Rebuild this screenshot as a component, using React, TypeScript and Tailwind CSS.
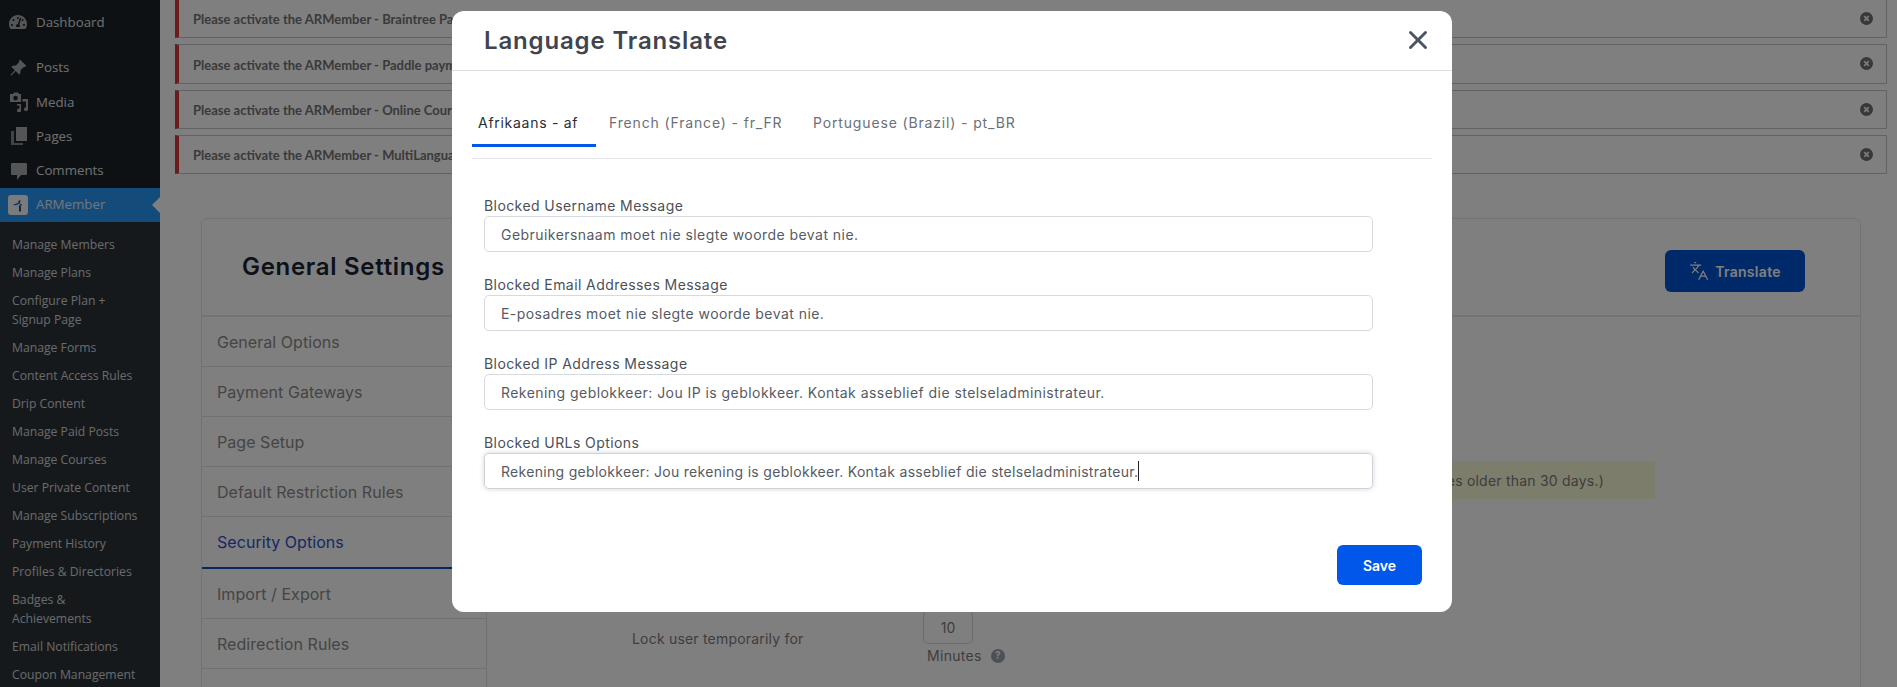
import React from 'react';
import { X, Languages } from 'lucide-react';
import { FaTachometerAlt } from 'react-icons/fa';
import { BsPinAngleFill } from 'react-icons/bs';

const MediaIcon = () => (
    <svg width="20" height="20" viewBox="0 0 20 20" fill="currentColor">
        <path d="M1 2h3l1-1.500h4L10 2h2v8H1V2zm5.500 1.800a2.300 2.300 0 1 0 0 4.600 2.300 2.300 0 0 0 0-4.600z" />
        <path d="M13.500 6.500H19v10.200a2 2 0 1 1-2-2V9h-3.500V6.500zM12 18a2 2 0 1 1-2-2h.5v-3H8v-1.500h4V18z" transform="translate(0 .5)" />
    </svg>
);

const PagesIcon = () => (
    <svg width="20" height="20" viewBox="0 0 20 20" fill="currentColor">
        <path d="M7 1h11v14H7V1z" />
        <path d="M2 5h3v12h9v2H2V5z" opacity=".75" />
    </svg>
);

const CommentIcon = () => (
    <svg width="20" height="20" viewBox="0 0 20 20" fill="currentColor">
        <path d="M3 2h14a1 1 0 0 1 1 1v10a1 1 0 0 1-1 1h-5l-4 5v-5H3a1 1 0 0 1-1-1V3a1 1 0 0 1 1-1z" />
    </svg>
);

const ArLogo = () => (
    <div className="w-5 h-5 rounded-[3px] bg-[#f4f6f8] flex items-center justify-center">
        <svg width="14" height="14" viewBox="0 0 14 14" fill="none">
            <path d="M1.500 7 7.500 4.800 7 3.500 9.500 1.500 9 5.500 5 7.300z" fill="#1766b5" />
            <circle cx="9.800" cy="6.800" r="1" fill="#1766b5" />
            <path d="M8.500 7.500c.9 2 1 3.800.4 6" stroke="#12233f" strokeWidth="1.600" />
        </svg>
    </div>
);

const NoticeClose = () => (
    <svg width="13" height="13" viewBox="0 0 13 13" className="shrink-0">
        <circle cx="6.500" cy="6.500" r="6.500" fill="#707070" />
        <path d="M4.200 4.200l4.600 4.600M8.800 4.200l-4.600 4.600" stroke="#f4f4f4" strokeWidth="1.800" />
    </svg>
);

const notices = [
    'Please activate the ARMember - Braintree Payment Gateway plugin.',
    'Please activate the ARMember - Paddle payment gateway plugin.',
    'Please activate the ARMember - Online Courses plugin.',
    'Please activate the ARMember - MultiLanguage plugin.',
];

const subMenu = [
    'Manage Members',
    'Manage Plans',
    'Configure Plan + Signup Page',
    'Manage Forms',
    'Content Access Rules',
    'Drip Content',
    'Manage Paid Posts',
    'Manage Courses',
    'User Private Content',
    'Manage Subscriptions',
    'Payment History',
    'Profiles & Directories',
    'Badges & Achievements',
    'Email Notifications',
    'Coupon Management',
];

const settingsNav = [
    'General Options',
    'Payment Gateways',
    'Page Setup',
    'Default Restriction Rules',
    'Security Options',
    'Import / Export',
    'Redirection Rules',
];

const fields = [
    { label: 'Blocked Username Message', value: 'Gebruikersnaam moet nie slegte woorde bevat nie.' },
    { label: 'Blocked Email Addresses Message', value: 'E-posadres moet nie slegte woorde bevat nie.' },
    { label: 'Blocked IP Address Message', value: 'Rekening geblokkeer: Jou IP is geblokkeer. Kontak asseblief die stelseladministrateur.' },
    { label: 'Blocked URLs Options', value: 'Rekening geblokkeer: Jou rekening is geblokkeer. Kontak asseblief die stelseladministrateur.', focused: true },
];

const SideItem = ({ icon, label }: { icon: React.ReactNode, label: string }) => (
    <div className="h-[34.4px] flex items-center text-[#dfe0e1] text-[13.3px]">
        <div className="w-[36px] pl-[9px] text-[#a7aaad] flex items-center">{icon}</div>
        <span className="pt-px">{label}</span>
    </div>
);

const Sidebar = () => (
    <div className="w-[160px] shrink-0 h-full bg-[#1d2327] pt-[5px] [font-family:'Open_Sans',sans-serif]">
        <SideItem icon={<FaTachometerAlt size={18} />} label="Dashboard" />
        <div className="mt-[11px]">
            <SideItem icon={<BsPinAngleFill size={18} />} label="Posts" />
            <SideItem icon={<MediaIcon />} label="Media" />
            <SideItem icon={<PagesIcon />} label="Pages" />
            <SideItem icon={<CommentIcon />} label="Comments" />
        </div>
        <div className="relative h-[34px] bg-[#2696f6] flex items-center text-[#e6eef5] text-[13.3px]">
            <div className="w-[36px] pl-[8px]"><ArLogo /></div>
            <span>ARMember</span>
            <div className="absolute right-0 top-[9px] w-0 h-0 border-y-[8px] border-y-transparent border-r-[8px] border-r-white"></div>
        </div>
        <div className="bg-[#2c3338] pt-[9px] h-full text-[#d3d6d8] text-[12.2px] leading-[19px]">
            {subMenu.map(item => (
                <div key={item} className="pl-[12px] pr-[18px] py-[4.500px]">{item}</div>
            ))}
        </div>
    </div>
);

const PageContent = () => (
    <div className="flex-1 min-w-0 pl-[15px] pr-[10px] -mt-px">
        <div className="flex flex-col gap-[6px] [font-family:Lato,sans-serif]">
            {notices.map(text => (
                <div key={text} className="h-[39.300px] flex items-center justify-between bg-white border border-[#c3c4c7] border-l-4 border-l-[#d63638] pl-[14px] pr-[13px]">
                    <span className="pt-[3px] text-[13px] font-bold text-[#747474]">{text}</span>
                    <NoticeClose />
                </div>
            ))}
        </div>

        <div className="mt-[44px] mx-[26px] border border-[#e4e6e9] rounded-t-[6px] h-[600px]">
            <div className="h-[98px] flex items-center justify-between border-b-2 border-b-[#e4e6e9] pl-[40px] pr-[55px]">
                <h1 className="text-[24px] font-semibold text-[#1a2230] tracking-[0.7px]">General Settings</h1>
                <button className="mt-[8px] w-[140px] h-[42px] rounded-[6px] bg-[#0052d4] text-white text-[14px] font-semibold tracking-[0.3px] flex items-center justify-center gap-[6px]">
                    <Languages size={20} strokeWidth={1.5} /> Translate
                </button>
            </div>
            <div className="flex">
                <div className="w-[284px] shrink-0">
                    {settingsNav.map(item => (
                        <div key={item} className={item === 'Security Options'
                            ? 'h-[52px] flex items-center pl-[15px] text-[16px] text-[#2a52c9] border-b-[2px] border-b-[#0f4dc4] tracking-[0.05px]'
                            : 'h-[50px] flex items-center pl-[15px] text-[16px] text-[#8a8a8a] border-b border-b-[#e2e3e5] tracking-[0.05px]'}>
                            {item}
                        </div>
                    ))}
                </div>
                <div className="flex-1 border-l border-l-[#e2e3e5] h-[420px] text-[14px] text-[#7c7c7c]">
                    <div className="ml-[215px] w-[953px] h-[38px] mt-[144px] bg-[#fbfbd8] flex items-center justify-end pr-[51px] tracking-[0.22px]">
                        (Note: this setting only removes the log entries older than 30 days.)
                    </div>
                    <div className="flex mt-[111px] ml-[145px]">
                        <div className="w-[291px] pt-[18px] tracking-[0.2px]">Lock user temporarily for</div>
                        <div>
                            <div className="w-[50px] h-[34px] border border-[#d5d7da] rounded-[5px] flex items-center justify-center">10</div>
                            <div className="flex items-center gap-[9px] pl-[4px] mt-px">
                                <span className="tracking-[0.3px]">Minutes</span>
                                <span className="w-[14px] h-[14px] rounded-full bg-[#9aa0ab] text-white text-[10px] font-bold flex items-center justify-center">?</span>
                            </div>
                        </div>
                    </div>
                </div>
            </div>
        </div>
    </div>
);

const Field = ({ label, value, focused }: { label: string, value: string, focused?: boolean }) => (
    <div className="mb-[23px]">
        <div className="h-[20px] text-[14px] leading-[20px] text-[#4b5058] tracking-[0.42px]">{label}</div>
        <div className={focused
            ? 'h-[36px] w-[889px] flex items-center pl-[16px] rounded-[5px] border border-[#cfd3d8] shadow-[0_0_4px_1px_rgba(80,90,110,0.18)] text-[14px] text-[#555b65] tracking-[0.3px]'
            : 'h-[36px] w-[889px] flex items-center pl-[16px] rounded-[5px] border border-[#d6d9dd] text-[14px] text-[#555b65] tracking-[0.45px]'}>
            <span>{value}</span>
            {focused && <span className="inline-block w-px h-[20px] bg-[#222]"></span>}
        </div>
    </div>
);

const TranslateModal = () => (
    <div className="absolute left-[452px] top-[11px] w-[1000px] h-[601px] bg-white rounded-[12px] flex flex-col">
        <div className="h-[60px] shrink-0 flex items-center justify-between border-b border-b-[#dcdfe3] pl-[32px] pr-[19px]">
            <h2 className="text-[24px] font-semibold text-[#3f4550] tracking-[0.85px]">Language Translate</h2>
            <X size={30} strokeWidth={2.3} className="text-[#4b5563] -mt-[2px]" />
        </div>
        <div className="mx-[20px] pt-[37px] pb-[11px] border-b border-b-[#e5e7ea] flex text-[14px] leading-[30px] tracking-[0.85px]">
            <div className="w-[124px] h-[39px] pl-[6px] border-b-[3px] border-b-[#0057ea] text-[#2a2e35] tracking-[0.72px]">Afrikaans - af</div>
            <div className="w-[204px] ml-[13px] text-[#6b7078]">French (France) - fr_FR</div>
            <div className="text-[#6b7078]">Portuguese (Brazil) - pt_BR</div>
        </div>
        <div className="pt-[37px] pl-[32px]">
            {fields.map(f => <Field key={f.label} {...f} />)}
        </div>
        <div className="flex justify-end pr-[30px] mt-[33px]">
            <button className="w-[85px] h-[40px] rounded-[6px] bg-[#0057ea] text-white text-[14px] font-semibold">Save</button>
        </div>
    </div>
);

export default function App() {
    return (
        <div className="relative w-[1897px] h-[687px] overflow-hidden bg-white flex [font-family:Inter,sans-serif]">
            <Sidebar />
            <PageContent />
            <div className="absolute inset-0 bg-black/50"></div>
            <TranslateModal />
        </div>
    );
}
